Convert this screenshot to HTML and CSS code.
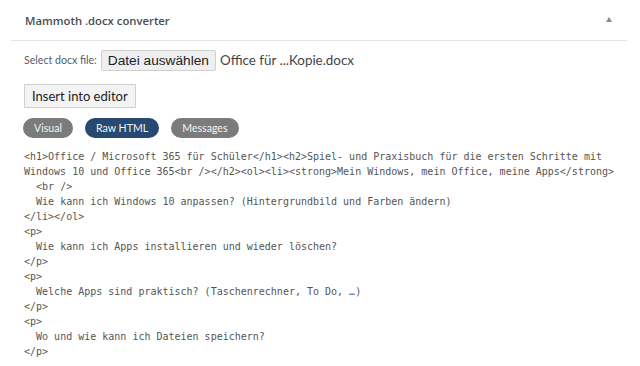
FILE: index.html
```html
<!DOCTYPE html>
<html lang="de">
<head>
<meta charset="utf-8">
<title>Mammoth .docx converter</title>
<link rel="stylesheet" href="styles.css">
</head>
<body>
<div class="panel">
  <div class="panel-head">
    <h2 class="panel-title">Mammoth .docx converter</h2>
    <span class="toggle" aria-hidden="true"></span>
  </div>
  <div class="panel-body">
    <div class="file-row">
      <label class="file-label">Select docx file:</label>
      <span class="file-btn">Datei auswählen</span>
      <span class="file-name">Office für ...Kopie.docx</span>
    </div>
    <div class="insert-row">
      <button class="insert-btn">Insert into editor</button>
    </div>
    <div class="tabs">
      <span class="tab">Visual</span>
      <span class="tab active">Raw HTML</span>
      <span class="tab">Messages</span>
    </div>
    <pre class="code">&lt;h1&gt;Office / Microsoft 365 für Schüler&lt;/h1&gt;&lt;h2&gt;Spiel- und Praxisbuch für die ersten Schritte mit Windows 10 und Office 365&lt;br /&gt;&lt;/h2&gt;&lt;ol&gt;&lt;li&gt;&lt;strong&gt;Mein Windows, mein Office, meine Apps&lt;/strong&gt;
  &lt;br /&gt;
  Wie kann ich Windows 10 anpassen? (Hintergrundbild und Farben ändern)
&lt;/li&gt;&lt;/ol&gt;
&lt;p&gt;
  Wie kann ich Apps installieren und wieder löschen?
&lt;/p&gt;
&lt;p&gt;
  Welche Apps sind praktisch? (Taschenrechner, To Do, …)
&lt;/p&gt;
&lt;p&gt;
  Wo und wie kann ich Dateien speichern?
&lt;/p&gt;</pre>
  </div>
</div>
</body>
</html>
```

FILE: styles.css
```css
html, body {
  margin: 0;
  padding: 0;
  background: #ffffff;
}
body {
  font-family: "Open Sans", "Noto Sans", sans-serif;
  color: #23282d;
}
.panel {
  margin: 0 13px 0 11px;
}
.panel-head {
  display: flex;
  align-items: center;
  justify-content: space-between;
  height: 40px;
  border-bottom: 1px solid #e2e4e7;
  padding: 0 15px 0 14px;
}
.panel-title {
  margin: 0;
  font-size: 11.3px;
  font-weight: 600;
  color: #4a4e52;
  line-height: 16px;
  padding-top: 1px;
}
.toggle {
  width: 0;
  height: 0;
  border-left: 3.5px solid transparent;
  border-right: 3.5px solid transparent;
  border-bottom: 5px solid #8a8a8a;
  margin-top: -1px;
}
.panel-body {
  padding: 0 13px;
}
.file-row {
  display: flex;
  align-items: center;
  margin-top: 9px;
  height: 20px;
}
.file-label {
  font-family: "Lato", "Open Sans", sans-serif;
  font-size: 10.6px;
  color: #555d66;
  margin-right: 4px;
}
.file-btn {
  font-family: "Liberation Sans", Arial, sans-serif;
  font-size: 13.7px;
  color: #222;
  background: #efefef;
  border: 1px solid #cfcfcf;
  border-radius: 2px;
  padding: 0 6px;
  height: 19px;
  line-height: 19px;
}
.file-name {
  font-family: "Lato", "Open Sans", sans-serif;
  font-size: 13.4px;
  color: #444;
  margin-left: 4px;
}
.insert-row {
  margin-top: 14px;
}
.insert-btn {
  font-family: "Lato", "Open Sans", sans-serif;
  font-size: 13px;
  color: #222;
  background: #f3f3f3;
  border: 1px solid #d0d0d0;
  border-radius: 0;
  padding: 0 7px;
  height: 24px;
  line-height: 22px;
  margin: 0;
}
.tabs {
  display: flex;
  gap: 12px;
  margin-top: 10px;
  margin-left: -1px;
}
.tab {
  font-family: "Lato", "Open Sans", sans-serif;
  font-size: 10.6px;
  color: #f4f4f4;
  background: #7b7b7b;
  border-radius: 10px;
  height: 20px;
  line-height: 20px;
  padding: 0 11px;
}
.tab.active {
  background: #264a71;
}
.code {
  margin: 11px 0 0 0;
  font-family: "DejaVu Sans Mono", "Liberation Mono", monospace;
  font-size: 10px;
  line-height: 15px;
  color: #555;
  white-space: pre-wrap;
  width: 600px;
}
```
